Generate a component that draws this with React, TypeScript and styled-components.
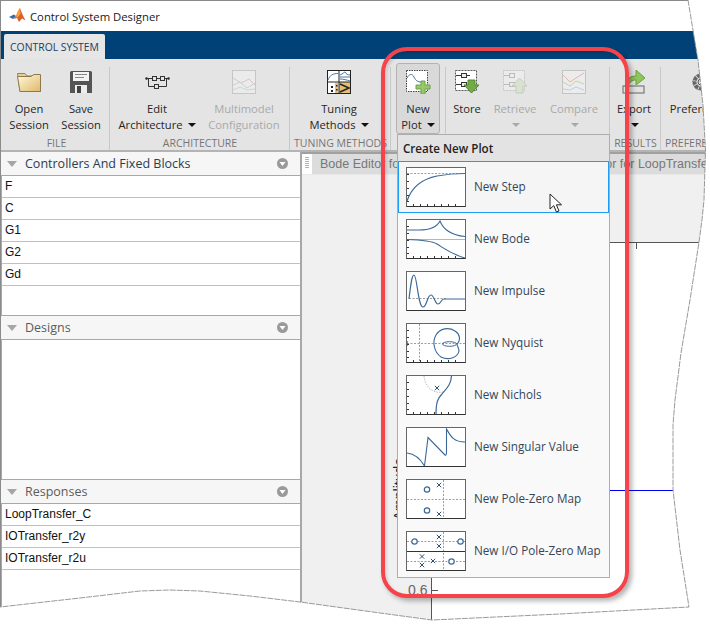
import React from "react";
import styled, { createGlobalStyle } from "styled-components";

const UI = `"Open Sans", "Noto Sans", sans-serif`;
const ARIAL = `"Liberation Sans", Arial, sans-serif`;
const EDGE: [number, number][] = [
  [688, 0], [693, 30], [698, 60], [703, 105], [705.5, 150], [704, 200], [702, 220], [699, 242], [690, 300], [681, 353],
  [675, 400], [673, 425], [673, 490], [680, 550], [689, 607], [560, 614], [432, 620], [380, 613], [300, 602],
  [250, 596], [200, 591], [170, 590], [140, 591], [80, 598], [0, 607],
];
const edgePoints = EDGE.map(([x, y]) => `${x},${y}`).join(" ");
const clip = `polygon(0px 0px, ${EDGE.map(([x, y]) => `${x}px ${y}px`).join(", ")})`;

const Global = createGlobalStyle`
  html, body { margin: 0; padding: 0; background: #fff; overflow: hidden; }
  * { box-sizing: border-box; }
`;
const Page = styled.div`position: relative; width: 710px; height: 629px; background: #fff; overflow: hidden;`;
const Win = styled.div`
  position: relative; width: 710px; height: 629px; display: flex; flex-direction: column;
  background: #fff; border-top: 1px solid #8a8a8a; border-left: 1px solid #8a8a8a;
`;
const TitleBar = styled.div`
  height: 30px; flex: none; display: flex; align-items: center; gap: 4px; padding: 0 0 0 8px;
  font: 11.3px ${UI}; color: #1a1a1a; background: #fff;
`;
const TabBar = styled.div`height: 28px; flex: none; background: #004277; padding: 3px 0 0 3px;`;
const Tab = styled.div`
  width: 101px; height: 25px; background: #e6e6e6; border-radius: 2px 2px 0 0; font: 10.4px/26px ${UI};
  color: #1d3d5a; text-align: center; white-space: nowrap;
`;
const Toolbar = styled.div`
  height: 93px; flex: none; display: flex; background: #e4e4e4; border-bottom: 2px solid #b4b4b4; overflow: hidden;
`;
const Section = styled.div<{ $w: number; $pad?: number; $last?: boolean }>`
  flex: none; width: ${(p) => p.$w}px; padding-left: ${(p) => p.$pad ?? 0}px; display: flex; flex-direction: column;
  position: relative;
  &::after {
    content: ""; display: ${(p) => (p.$last ? "none" : "block")}; position: absolute; right: 0; top: 8px; bottom: 0; width: 1px; background: #c8c8c8;
  }
`;
const Buttons = styled.div`display: flex; height: 76px; flex: none; padding-top: 4px;`;
const SectionLabel = styled.div`
  font: 10.5px/14px ${UI}; color: #757575; text-align: center; white-space: nowrap; margin-top: 1px;
`;
const ToolButton = styled.div<{ $w: number; $off?: boolean; $active?: boolean }>`
  flex: none; width: ${(p) => p.$w}px; height: 71px; display: flex; flex-direction: column; align-items: center;
  font: 11.2px/16px ${UI}; color: ${(p) => (p.$off ? "#a9a9a9" : "#262626")}; white-space: nowrap; border-radius: 3px;
  ${(p) => (p.$active ? "background:#d9d9d9; border:1px solid #b2b2b2;" : "border:1px solid transparent;")}
`;
const IconSlot = styled.div`height: 37px; flex: none; padding-top: 6px;`;
const IconBox = styled.div`height: 24px; display: flex; align-items: center; justify-content: center;`;
const Caret = styled.span<{ $off?: boolean; $alone?: boolean }>`
  display: inline-block; width: 0; height: 0; margin-left: ${(p) => (p.$alone ? 0 : 5)}px; vertical-align: 2px;
  border-left: 4px solid transparent; border-right: 4px solid transparent;
  border-top: 4px solid ${(p) => (p.$off ? "#a9a9a9" : "#111")};
`;
const Body = styled.div`flex: 1; min-height: 0; display: flex;`;
const LeftPane = styled.div`width: 301px; flex: none; display: flex; flex-direction: column; background: #fff; border-right: 2px solid #a8a8a8;`;
const PanelHeader = styled.div<{ $on?: boolean }>`
  height: 23px; flex: none; display: flex; align-items: center; padding: 0 12px 0 6px; background: #f6f6f6;
  font: 12.5px ${UI}; color: ${(p) => (p.$on ? "#2c3b50" : "#5c5c5c")};
`;
const Disclose = styled.span`
  width: 0; height: 0; margin-right: 8px; border-left: 5px solid transparent; border-right: 5px solid transparent; border-top: 6px solid #a6a6a6;
`;
const HeaderText = styled.span`flex: 1;`;
const PanelList = styled.div<{ $h?: number }>`
  ${(p) => (p.$h ? `height:${p.$h}px; flex:none;` : "flex:1;")}
  background: #fff; border-top: 1px solid #a8a8a8; border-bottom: 1px solid #a8a8a8; border-left: 1px solid #a8a8a8;
`;
const Row = styled.div`
  height: 22px; padding: 0 0 0 3px; border-bottom: 1px solid #c0c0c0; font: 12px/21px ${ARIAL}; color: #111;
`;
const RightPane = styled.div`flex: 1; min-width: 0; display: flex; flex-direction: column; background: #f0f0f0;`;
const DocStrip = styled.div`
  height: 23px; flex: none; display: flex; background: #dcdcdc; border-top: 2px solid #a0a0a0; border-bottom: 1px solid #e8e8e8;
  font: 12.5px/21px ${ARIAL}; color: #777; white-space: nowrap; overflow: hidden;
`;
const Grip = styled.div`
  width: 10px; flex: none; background: #fff; display: flex; flex-direction: column; gap: 1px; padding: 3px 3px 0;
  & > i { display: block; height: 1px; background: #b4b4b4; }
`;
const DocTab = styled.div<{ $w: number }>`flex: none; width: ${(p) => p.$w}px; padding-left: 8px;`;
const Figure = styled.div`flex: 1; min-height: 0; display: flex; padding: 67px 0 0 129px; background: #f0f0f0;`;
const Axes = styled.div`position: relative; flex: 1; background: #fff; border-top: 1px solid #555; border-left: 1px solid #555;`;
const BlueLine = styled.div`position: absolute; left: 0; right: 0; top: 247px; height: 1px; background: #0000f0;`;
const TopTick = styled.div`position: absolute; left: 204px; top: 0; width: 1px; height: 6px; background: #555;`;
const LeftTick = styled.div`position: absolute; left: 0; top: 347px; width: 6px; height: 1px; background: #555;`;
const TickLabel = styled.div`position: absolute; left: -24px; top: 338px; font: 14px/18px ${ARIAL}; color: #666;`;
const AxisTitle = styled.div`
  position: absolute; left: -41px; top: 215px; writing-mode: vertical-rl; transform: rotate(180deg); font: 14px/16px ${ARIAL}; color: #222;
`;
const Popup = styled.div`
  position: absolute; left: 396px; top: 133px; width: 213px; height: 444px; background: #f9f9f9; border: 1px solid #adadad;
  display: flex; flex-direction: column;
`;
const PopupHead = styled.div`
  height: 26px; flex: none; background: #e3e3e3; padding: 1px 0 0 5px; font: 600 11.6px/26px ${UI}; color: #222;
`;
const Item = styled.div<{ $sel?: boolean }>`
  height: 52px; flex: none; display: flex; align-items: center; gap: 8px; padding-left: 8px; font: 11.7px ${UI}; color: #33465a;
  ${(p) => (p.$sel ? "background:#f5f5f5; box-shadow: inset 0 0 0 1px #1c9cf2;" : "")}
`;
const ItemText = styled.span`margin-top: -3px;`;
const Thumb = styled.svg`
  flex: none; width: 60px; height: 40px; display: block; background: #fff; border: 1px solid #666; border-bottom-color: #333; overflow: hidden;
`;
const Ring = styled.div`
  position: absolute; left: 380px; top: 46px; width: 248px; height: 551px; border: 4px solid #f4434a; border-radius: 26px;
  box-shadow: 3px 3px 5px rgba(0,0,0,.3), inset 2px 2px 3px rgba(0,0,0,.12); pointer-events: none;
`;
const Cursor = styled.svg`position: absolute; left: 548px; top: 192px; width: 14px; height: 21px;`;
const EdgeLine = styled.svg`position: absolute; left: 0; top: 0; width: 710px; height: 629px; pointer-events: none;`;
const Clipped = styled.div`width: 710px; height: 629px; overflow: hidden;`;

const C = "#3a6998";
const Frame = ({ x = true, y = true }: { x?: boolean; y?: boolean }) => (
  <g stroke="#333" strokeWidth="1">
    {x && [7, 14, 21, 28, 35, 42, 49].map((v) => <path key={v} d={`M${v - 0.5} 38V36`} />)}
    {y && [6, 13, 20, 27, 33].map((v) => <path key={v} d={`M0 ${v + 0.5}H2`} />)}
  </g>
);
const Cross = ({ x: a, y: b }: { x: number; y: number }) => (
  <path d={`M${a - 2.2} ${b - 2.2}l4.4 4.4M${a + 2.2} ${b - 2.2}l-4.4 4.4`} stroke="#1b3d63" strokeWidth="0.9" fill="none" />
);
const Dash = ({ d }: { d: string }) => <path d={d} stroke="#9c9c9c" strokeDasharray="2 1.5" fill="none" />;
const thumbs: React.ReactNode[] = [
  <><Dash d="M0 5.5H58" /><Frame /><path d="M0 33C5 18 15 11 30 8C38 6.5 45 5.5 58 5.5" stroke={C} strokeWidth="1.2" fill="none" /></>,
  <><path d="M0 19.5H58" stroke="#b5b5b5" /><Frame /><path d="M0 10H12C22 10 30 7 33 1C36 9 44 15 58 16.5M0 19.5C15 20 25 21 30 24C38 29 44 34 58 38" stroke={C} strokeWidth="1.1" fill="none" /></>,
  <><Dash d="M2 26.5H40" /><path d="M2 27C4 10 5 3 7 3C10 3 11 35 16 35C20 35 20 23 24 23C27 23 28 32 31 32C34 32 34 27 37 27H58" stroke={C} strokeWidth="1.2" fill="none" /></>,
  <><Dash d="M12.5 0V38M0 19.5H58" /><Frame /><path d="M0 17v5" stroke="#f00" strokeWidth="1.2" /><path d="M50 20C54 16 53 10 48 7C42 3 33 4 29 11C25 18 27 28 34 33C42 37 51 33 52 27C52 24 50 22 50 20Z" stroke={C} strokeWidth="1.1" fill="none" /><ellipse cx="42.5" cy="20" rx="7" ry="2.3" stroke={C} fill="none" /></>,
  <><path d="M17 0C18 10 25 18 36 16" stroke="#bbb" strokeDasharray="1.5 1.2" fill="none" /><Frame /><path d="M44.5 0C44 9 39 13 35 18C31 22 29 26 29 38" stroke={C} strokeWidth="1.2" fill="none" /><Cross x={30} y={12} /></>,
  <path d="M0 25C8 26 13 30 17.5 38L21 9.5L38 27C39 28 39.5 26 39.5 24V1C43 7 46 14 58 14" stroke={C} strokeWidth="1.1" fill="none" />,
  <><Dash d="M36.5 0V38M0 19.5H58" /><circle cx="20" cy="9.5" r="2.7" stroke={C} strokeWidth="1.2" fill="none" /><circle cx="20" cy="30.5" r="2.7" stroke={C} strokeWidth="1.2" fill="none" /><Cross x={32} y={5} /><Cross x={32} y={34} /></>,
  <><Dash d="M36.5 0V38M0 9.5H58M0 29.5H58" /><path d="M0 19.5H58" stroke="#333" /><circle cx="7.5" cy="9.5" r="2.7" stroke={C} strokeWidth="1.2" fill="#fff" /><circle cx="53.5" cy="9.5" r="2.7" stroke={C} strokeWidth="1.2" fill="#fff" /><circle cx="44.5" cy="29.5" r="2.7" stroke={C} strokeWidth="1.2" fill="#fff" /><Cross x={32} y={5} /><Cross x={32} y={14} /><Cross x={15} y={24.5} /><Cross x={15} y={33} /><Cross x={26} y={29} /></>,
];
const items = ["New Step", "New Bode", "New Impulse", "New Nyquist", "New Nichols", "New Singular Value", "New Pole-Zero Map", "New I/O Pole-Zero Map"];

const Logo = () => (
  <svg width="17" height="16" viewBox="0 0 17 16">
    <path d="M0 9L5 6.5L7 8L4 11Z" fill="#2a6fb0" />
    <path d="M4 11L7 8L9 3L11 0C12 3 14 8 16.5 12.5L13 10.5L10 14L8 10Z" fill="#d9602a" />
    <path d="M9 3L11 0L11.5 6L8 10L7 8Z" fill="#f2a23a" />
  </svg>
);
const Ic = {
  open: <svg width="24" height="20" viewBox="0 0 24 20"><defs><linearGradient id="fo" x1="0" y1="0" x2="1" y2="1"><stop offset="0" stopColor="#fffbe0" /><stop offset="1" stopColor="#e0b868" /></linearGradient></defs><path d="M.5 1.5H8L10 4H23.5V19.5H3Z" fill="#e6cf94" stroke="#9b8450" /><path d="M.5 4.5H14L17 2.5H23.5V19.5H3Z" fill="url(#fo)" stroke="#8d7a4c" /></svg>,
  save: <svg width="22" height="22" viewBox="0 0 22 22"><path d="M0 1.5A1.5 1.5 0 0 1 1.5 0H20.5A1.5 1.5 0 0 1 22 1.5V22H0Z" fill="#555" /><rect x="3" y="1" width="16" height="9" fill="#f4f4f4" /><path d="M5 3.5h12M5 6.5h9" stroke="#888" /><rect x="5" y="14" width="12" height="8" fill="#eee" /><rect x="7" y="15" width="4" height="7" fill="#444" /></svg>,
  arch: <svg width="25" height="16" viewBox="0 0 25 16" fill="none" stroke="#333"><path d="M1 4.5H7M11 4.5H15M19 4.5H24M3.5 4.5V12.5H9M13 12.5H21.5V4.5" /><rect x="7.5" y="2.5" width="4" height="4" /><rect x="15.5" y="2.5" width="4" height="4" /><rect x="9.5" y="10.5" width="4" height="4" /><circle cx="1.5" cy="4.5" r="1" /><circle cx="23.5" cy="4.5" r="1" /></svg>,
  multi: <svg width="24" height="24" viewBox="0 0 24 24" fill="none"><rect x=".5" y=".5" width="23" height="23" fill="#ebebeb" stroke="#c6c6c6" /><path d="M1 8L9 13L17 9L23 15" stroke="#d8c6c6" /><path d="M1 15L8 12L15 18L23 13" stroke="#c7d2dc" /><path d="M1 20L8 17L15 20L23 19" stroke="#d0d6c8" /></svg>,
  tune: <svg width="24" height="24" viewBox="0 0 24 24" fill="none"><rect width="24" height="24" fill="#222" /><rect x="1" y="1" width="10.5" height="10.5" fill="#fff" /><rect x="12.5" y="1" width="10.5" height="10.5" fill="#fff" /><rect x="1" y="12.5" width="10.5" height="10.5" fill="#fff" /><rect x="12.5" y="12.5" width="10.5" height="10.5" fill="#e6bd72" /><path d="M1 10C3 5 6 3.5 11 3.5" stroke="#4b78a8" /><path d="M13 5C16 4 17 2 18 2C19 4 21 5 23 5M13 7H23M13 9C16 9 20 10 23 11" stroke="#4b78a8" /><rect x="4" y="16" width="2" height="2" fill="#222" /><rect x="4" y="20" width="2" height="2" fill="#222" /><path d="M8 13h3v10h-3z" fill="#e6bd72" /><rect x="9" y="15" width="1.5" height="1.5" fill="#222" /><rect x="9" y="19" width="1.5" height="1.5" fill="#222" /><path d="M13 14L22 18L13 22" stroke="#222" strokeWidth="1.5" /></svg>,
  plot: <svg width="25" height="24" viewBox="0 0 25 24" fill="none"><rect x=".5" y=".5" width="21" height="21" fill="#fff" stroke="#444" strokeDasharray="1.5 1" /><path d="M1 8C3 4 6 3 8 7C10 11 12 12 15 12" stroke="#46709c" /><path d="M15 11h4v4h5v4h-5v5h-4v-5h-5v-4h5z" fill="#96c86a" stroke="#6fa14a" /></svg>,
  store: <svg width="25" height="24" viewBox="0 0 25 24" fill="none"><rect x=".5" y=".5" width="21" height="20" fill="#fff" stroke="#555" strokeDasharray="2 1" /><rect x="6.5" y="3.5" width="5" height="4" stroke="#333" fill="#eee" /><rect x="6.5" y="12.5" width="5" height="4" stroke="#333" fill="#eee" /><path d="M1 5.5H6.5M1 14.5H6.5M11.5 5.5H15" stroke="#333" /><path d="M13 10H20V15H24L16.5 23L9 15H13Z" fill="#74ab48" stroke="#4f8a2e" /></svg>,
  retr: <svg width="25" height="24" viewBox="0 0 25 24" fill="none" opacity=".55"><rect x=".5" y=".5" width="21" height="20" fill="#f2f2f2" stroke="#aaa" strokeDasharray="2 1" /><rect x="6.5" y="3.5" width="5" height="4" stroke="#999" /><rect x="6.5" y="12.5" width="5" height="4" stroke="#999" /><path d="M1 5.5H6.5M1 14.5H6.5" stroke="#999" /><path d="M13 23V16H9L16.5 8L24 16H20V23Z" fill="#cfe0c0" stroke="#a8b89a" /></svg>,
  comp: <svg width="24" height="24" viewBox="0 0 24 24" fill="none"><rect x=".5" y=".5" width="23" height="23" fill="#ececec" stroke="#c4c4c4" /><path d="M1 5L8 12L14 8L22 3" stroke="#e4b4b0" /><path d="M1 12L8 16L14 11L22 14" stroke="#bcd8a8" /><path d="M1 19L8 20L14 17L22 20" stroke="#b8d0e4" /></svg>,
  exp: <svg width="24" height="24" viewBox="0 0 24 24" fill="none"><rect x="1" y="16" width="21" height="7" fill="#e2e2e2" stroke="#666" /><path d="M3 17C4 9 8 6 14 6V0L23 8L14 15V10C10 10 7 12 6 17Z" fill="#8ec65c" stroke="#6ca040" /></svg>,
  gear: <svg width="22" height="22" viewBox="0 0 22 22" fill="none"><circle cx="11" cy="11" r="6.5" stroke="#666" strokeWidth="4" strokeDasharray="3.5 0.8" /><circle cx="11" cy="11" r="8" stroke="#888" strokeWidth="1" strokeDasharray="2.5 2.5" /><circle cx="11" cy="11" r="3" fill="#ddd" stroke="#555" /></svg>,
};

function Btn({ w, icon, lines, caret, off, active }: { w: number; icon: React.ReactNode; lines: [string, string?]; caret?: "inline" | "below"; off?: boolean; active?: boolean }) {
  return (
    <ToolButton $w={w} $off={off} $active={active}>
      <IconSlot><IconBox>{icon}</IconBox></IconSlot>
      <div>{lines[0]}</div>
      <div>{lines[1] ?? "\u00a0"}{caret && <Caret $off={off} $alone={caret === "below"} />}</div>
    </ToolButton>
  );
}

function Panel({ title, on, rows, h }: { title: string; on?: boolean; rows: string[]; h?: number }) {
  return (
    <>
      <PanelHeader $on={on}>
        <Disclose />
        <HeaderText>{title}</HeaderText>
        <svg width="11" height="11" viewBox="0 0 11 11"><circle cx="5.5" cy="5.5" r="5.5" fill="#9a9a9a" /><path d="M2.5 4H8.5L5.5 8Z" fill="#fff" /></svg>
      </PanelHeader>
      <PanelList $h={h}>{rows.map((r) => <Row key={r}>{r}</Row>)}</PanelList>
    </>
  );
}

export default function App() {
  return (
    <Page>
      <Global />
      <Clipped style={{ clipPath: clip }}>
        <Win>
          <TitleBar><Logo />Control System Designer</TitleBar>
          <TabBar><Tab>CONTROL SYSTEM</Tab></TabBar>
          <Toolbar>
            <Section $w={109} $pad={2}>
              <Buttons>
                <Btn w={52} icon={Ic.open} lines={["Open", "Session"]} />
                <Btn w={52} icon={Ic.save} lines={["Save", "Session"]} />
              </Buttons>
              <SectionLabel>FILE</SectionLabel>
            </Section>
            <Section $w={180}>
              <Buttons>
                <Btn w={94} icon={Ic.arch} lines={["Edit", "Architecture"]} caret="inline" />
                <Btn w={80} icon={Ic.multi} lines={["Multimodel", "Configuration"]} off />
              </Buttons>
              <SectionLabel>ARCHITECTURE</SectionLabel>
            </Section>
            <Section $w={101}>
              <Buttons>
                <Btn w={98} icon={Ic.tune} lines={["Tuning", "Methods"]} caret="inline" />
              </Buttons>
              <SectionLabel>TUNING METHODS</SectionLabel>
            </Section>
            <Section $w={55} $pad={5}>
              <Buttons>
                <Btn w={44} icon={Ic.plot} lines={["New", "Plot"]} caret="inline" active />
              </Buttons>
            </Section>
            <Section $w={164} $pad={2}>
              <Buttons>
                <Btn w={38} icon={Ic.store} lines={["Store"]} />
                <Btn w={58} icon={Ic.retr} lines={["Retrieve"]} caret="below" off />
                <Btn w={60} icon={Ic.comp} lines={["Compare"]} caret="below" off />
              </Buttons>
            </Section>
            <Section $w={51}>
              <Buttons>
                <Btn w={48} icon={Ic.exp} lines={["Export"]} caret="below" />
              </Buttons>
              <SectionLabel>RESULTS</SectionLabel>
            </Section>
            <Section $w={60} $last $pad={4}>
              <Buttons>
                <Btn w={72} icon={Ic.gear} lines={["Preferences"]} />
              </Buttons>
              <SectionLabel>PREFERENCES</SectionLabel>
            </Section>
          </Toolbar>
          <Body>
            <LeftPane>
              <Panel title="Controllers And Fixed Blocks" on rows={["F", "C", "G1", "G2", "Gd"]} h={141} />
              <Panel title="Designs" rows={[]} h={141} />
              <Panel title="Responses" rows={["LoopTransfer_C", "IOTransfer_r2y", "IOTransfer_r2u"]} />
            </LeftPane>
            <RightPane>
              <DocStrip>
                <Grip><i /><i /><i /><i /><i /><i /></Grip>
                <DocTab $w={197}>Bode Editor for LoopTransfer_C</DocTab>
                <DocTab $w={220}>Root Locus Editor for LoopTransfer_C</DocTab>
              </DocStrip>
              <Figure>
                <Axes>
                  <BlueLine />
                  <TopTick />
                  <LeftTick />
                  <TickLabel>0.6</TickLabel>
                  <AxisTitle>Amplitude</AxisTitle>
                </Axes>
              </Figure>
            </RightPane>
          </Body>
          <Popup>
            <PopupHead>Create New Plot</PopupHead>
            {items.map((t, i) => (
              <Item key={t} $sel={i === 0}>
                <Thumb viewBox="0 0 58 38">{thumbs[i]}</Thumb>
                <ItemText>{t}</ItemText>
              </Item>
            ))}
          </Popup>
          <Cursor viewBox="0 0 14 21"><path d="M1 1V16L4.8 12.6L7.4 19L10 18L7.4 11.8H12.5Z" fill="#fff" stroke="#222" /></Cursor>
          <Ring />
        </Win>
      </Clipped>
      <EdgeLine viewBox="0 0 710 629"><polyline points={edgePoints} fill="none" stroke="#9a9a9a" strokeDasharray="6 1" /></EdgeLine>
    </Page>
  );
}
